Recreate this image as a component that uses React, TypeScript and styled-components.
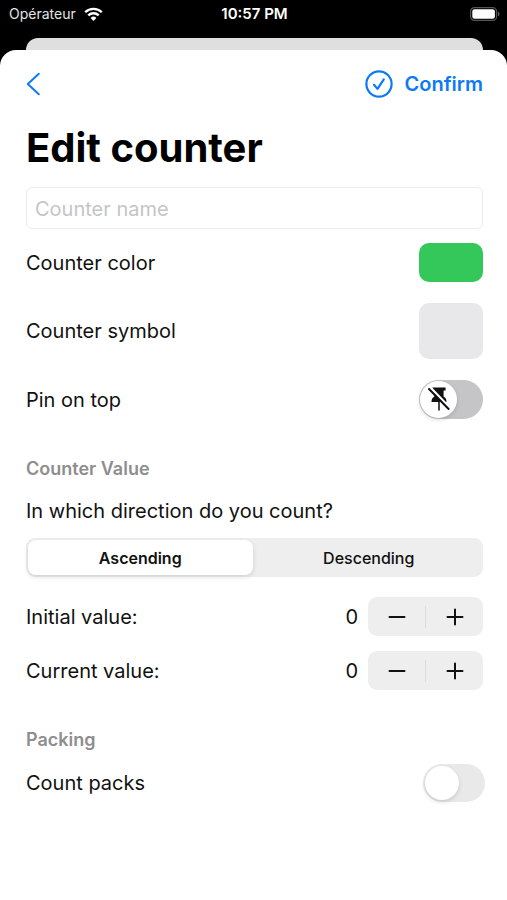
import React, { useState } from "react";
import styled, { createGlobalStyle } from "styled-components";

const GlobalStyle = createGlobalStyle`
  *, *::before, *::after { box-sizing: border-box; }
  body {
    margin: 0;
    background: #000;
    color: #111;
    font-family: Inter, "Liberation Sans", sans-serif;
    font-size: 20px;
    line-height: 24px;
  }
  button, input { font: inherit; color: inherit; }
  button { border: 0; padding: 0; background: none; cursor: pointer; }
`;

const Screen = styled.div`
  min-height: 100vh;
  display: flex;
  flex-direction: column;
  background: #000;
`;

const StatusBar = styled.header`
  display: grid;
  grid-template-columns: 1fr auto 1fr;
  align-items: center;
  height: 28px;
  padding: 0 7px 0 9px;
  color: #fff;
  font-size: 14px;
  line-height: 20px;
`;

const Carrier = styled.div`
  display: flex;
  align-items: center;
  gap: 8px;
  color: #e4e4e4;
`;

const Clock = styled.time`
  font-size: 15px;
  font-weight: 600;
`;

const Battery = styled.div`
  display: flex;
  justify-content: flex-end;
`;

const BackSheet = styled.div`
  height: 12px;
  margin: 10px 24px 0 26px;
  border-radius: 12px 12px 0 0;
  background: #dfdfdf;
`;

const Sheet = styled.main`
  flex: 1;
  padding: 14px 24px 40px 26px;
  border-radius: 16px 16px 0 0;
  background: #fff;
`;

const NavBar = styled.nav`
  display: flex;
  align-items: center;
  justify-content: space-between;
  height: 40px;
  color: #0b7bf5;
`;

const NavButton = styled.button`
  display: flex;
  align-items: center;
  gap: 12px;
  color: inherit;
  font-weight: 600;
`;

const Title = styled.h1`
  margin: 20px 0 15px;
  color: #000;
  font-size: 40px;
  line-height: 48px;
  font-weight: 700;
`;

const NameInput = styled.input`
  display: block;
  width: 100%;
  height: 42px;
  padding: 2px 8px 0;
  border: 1px solid #ececec;
  border-radius: 6px;
  background: #fff;
  &::placeholder { color: #c5c5c7; opacity: 1; }
`;

const Fields = styled.div`
  display: flex;
  flex-direction: column;
  gap: 21px;
  padding-top: 14px;
`;

const Row = styled.div`
  display: flex;
  align-items: center;
  justify-content: space-between;
  min-height: 39px;
`;

const Swatch = styled.button<{ $color: string; $tall?: boolean }>`
  width: 64px;
  height: ${(p) => (p.$tall ? 56 : 39)}px;
  border-radius: 10px;
  background: ${(p) => p.$color};
`;

const SwitchFrame = styled.div<{ $outset?: boolean }>`
  position: relative;
  display: flex;
  margin-right: ${(p) => (p.$outset ? "-2px" : "0")};
`;

const Switch = styled.input<{ $track: string; $width: number; $height: number }>`
  appearance: none;
  display: flex;
  width: ${(p) => p.$width}px;
  height: ${(p) => p.$height}px;
  margin: 0;
  padding: ${(p) => (p.$height === 39 ? 1 : 2)}px;
  border-radius: 20px;
  background: ${(p) => p.$track};
  cursor: pointer;
  &::before {
    content: "";
    height: 100%;
    aspect-ratio: 1;
    border-radius: 50%;
    background: #fff;
    box-shadow: 0 2px 4px rgba(0, 0, 0, 0.14);
  }
  &:checked { justify-content: flex-end; background: #34c759; }
`;

const SwitchIcon = styled.span<{ $on: boolean }>`
  position: absolute;
  top: 0;
  ${(p) => (p.$on ? "right" : "left")}: 1px;
  display: grid;
  place-items: center;
  width: 37px;
  height: 37px;
  pointer-events: none;
`;

const SectionTitle = styled.h2`
  margin: 38px 0 11px;
  color: #8e8e8e;
  font-size: 18px;
  line-height: 24px;
  font-weight: 600;
`;

const Segmented = styled.fieldset`
  margin: 0;
  padding: 0;
  border: 0;
  min-width: 0;
`;

const Question = styled.legend`
  padding: 7px 0 15px;
`;

const Segments = styled.div`
  display: grid;
  grid-template-columns: 1fr 1fr;
  gap: 4px;
  padding: 2px;
  border-radius: 9px;
  background: #eee;
`;

const Segment = styled.label`
  display: grid;
  place-items: center;
  height: 35px;
  border-radius: 8px;
  font-size: 16px;
  line-height: 20px;
  font-weight: 500;
  cursor: pointer;
  &:has(input:checked) {
    background: #fff;
    font-weight: 600;
    box-shadow: 0 2px 5px rgba(0, 0, 0, 0.12);
  }
`;

const SegmentRadio = styled.input`
  position: absolute;
  appearance: none;
  margin: 0;
`;

const Values = styled.div`
  display: flex;
  flex-direction: column;
  gap: 15px;
  padding-top: 20px;
`;

const StepperGroup = styled.div`
  display: flex;
  align-items: center;
  gap: 10px;
`;

const Stepper = styled.div`
  display: flex;
  align-items: center;
  width: 115px;
  height: 39px;
  border-radius: 9px;
  background: #eee;
`;

const StepButton = styled.button`
  flex: 1;
  display: grid;
  place-items: center;
  height: 100%;
`;

const StepDivider = styled.span`
  width: 1px;
  height: 22px;
  background: #dcdcdc;
`;

function WifiIcon() {
  return (
    <svg width="19" height="14" viewBox="0 0 19 14" fill="none" stroke="#fff" strokeWidth="2.3" aria-hidden="true">
      <path d="M1.2 5.2a11.8 11.8 0 0 1 16.6 0" />
      <path d="M4.3 8.4a7.4 7.4 0 0 1 10.4 0" />
      <path d="M9.5 14 6.6 11a4.1 4.1 0 0 1 5.8 0z" fill="#fff" stroke="none" />
    </svg>
  );
}

function BatteryIcon() {
  return (
    <svg width="30" height="14" viewBox="0 0 30 14" aria-hidden="true">
      <rect x="0.6" y="0.6" width="26" height="12.8" rx="3.8" fill="none" stroke="#555" strokeWidth="1.2" />
      <rect x="2.3" y="2.2" width="22.6" height="9.6" rx="2.2" fill="#fff" />
      <path d="M28 4.7c1.9.7 1.9 3.9 0 4.6z" fill="#666" />
    </svg>
  );
}

function BackIcon() {
  return (
    <svg width="15" height="24" viewBox="0 0 15 24" fill="none" stroke="currentColor" strokeWidth="2" strokeLinecap="round" strokeLinejoin="round" aria-hidden="true">
      <path d="M12.8 1.8 1.800 12l11 10.2" />
    </svg>
  );
}

function ConfirmIcon() {
  return (
    <svg width="28" height="28" viewBox="0 0 28 28" fill="none" stroke="currentColor" strokeWidth="2.2" strokeLinecap="round" strokeLinejoin="round" aria-hidden="true">
      <circle cx="14" cy="14" r="12.6" />
      <path d="m9 14.8 3.5 4.1 6.3-9.5" />
    </svg>
  );
}

function UnpinIcon() {
  return (
    <svg width="22" height="26" viewBox="0 0 22 26" aria-hidden="true">
      <path d="M4.4 1.4h13.2v3.2h-2v6c2 1 2.900 2.700 2.900 5.400H3.500c0-2.700.900-4.400 2.900-5.400v-6h-2z" fill="#111" />
      <path d="M11 16v8.400" stroke="#333" strokeWidth="1.800" />
      <path d="m2.400 1.600 18.800 19.600" stroke="#fff" strokeWidth="2.600" />
      <path d="m1 3 19.600 20" stroke="#111" strokeWidth="2" strokeLinecap="round" />
    </svg>
  );
}

function StepIcon({ plus }: { plus?: boolean }) {
  return (
    <svg width="18" height="18" viewBox="0 0 18 18" stroke="#111" strokeWidth="2" strokeLinecap="round" aria-hidden="true">
      <path d={plus ? "M1.500 9h15M9 1.500v15" : "M1.500 9h15"} />
    </svg>
  );
}

function ValueRow({ label }: { label: string }) {
  const [value, setValue] = useState(0);
  return (
    <Row>
      <span>{label}:</span>
      <StepperGroup>
        <output aria-label={label}>{value}</output>
        <Stepper role="group" aria-label={label}>
          <StepButton type="button" aria-label={`Decrease ${label}`} onClick={() => setValue(value - 1)}>
            <StepIcon />
          </StepButton>
          <StepDivider />
          <StepButton type="button" aria-label={`Increase ${label}`} onClick={() => setValue(value + 1)}>
            <StepIcon plus />
          </StepButton>
        </Stepper>
      </StepperGroup>
    </Row>
  );
}

const directions = ["Ascending", "Descending"];

export default function App() {
  const [pinned, setPinned] = useState(false);
  const [direction, setDirection] = useState(directions[0]);

  return (
    <Screen>
      <GlobalStyle />
      <StatusBar>
        <Carrier>
          Opérateur
          <WifiIcon />
        </Carrier>
        <Clock>10:57 PM</Clock>
        <Battery>
          <BatteryIcon />
        </Battery>
      </StatusBar>
      <BackSheet />
      <Sheet>
        <NavBar>
          <NavButton type="button" aria-label="Back">
            <BackIcon />
          </NavButton>
          <NavButton type="button">
            <ConfirmIcon />
            Confirm
          </NavButton>
        </NavBar>
        <Title>Edit counter</Title>
        <NameInput type="text" placeholder="Counter name" aria-label="Counter name" />
        <Fields>
          <Row>
            <span id="color-label">Counter color</span>
            <Swatch type="button" $color="#34c759" aria-labelledby="color-label" />
          </Row>
          <Row>
            <span id="symbol-label">Counter symbol</span>
            <Swatch type="button" $color="#e8e8ea" $tall aria-labelledby="symbol-label" />
          </Row>
          <Row>
            <label htmlFor="pin">Pin on top</label>
            <SwitchFrame>
              <Switch
                id="pin"
                type="checkbox"
                role="switch"
                $track="#c5c5c7"
                $width={64}
                $height={39}
                checked={pinned}
                onChange={(e) => setPinned(e.target.checked)}
              />
              <SwitchIcon $on={pinned}>
                <UnpinIcon />
              </SwitchIcon>
            </SwitchFrame>
          </Row>
        </Fields>

        <SectionTitle>Counter Value</SectionTitle>
        <Segmented>
          <Question>In which direction do you count?</Question>
          <Segments>
            {directions.map((name) => (
              <Segment key={name}>
                <SegmentRadio
                  type="radio"
                  name="direction"
                  checked={direction === name}
                  onChange={() => setDirection(name)}
                />
                {name}
              </Segment>
            ))}
          </Segments>
        </Segmented>
        <Values>
          <ValueRow label="Initial value" />
          <ValueRow label="Current value" />
        </Values>

        <SectionTitle>Packing</SectionTitle>
        <Row>
          <label htmlFor="packs">Count packs</label>
          <SwitchFrame $outset>
            <Switch id="packs" type="checkbox" role="switch" $track="#e9e9ea" $width={62} $height={38} />
          </SwitchFrame>
        </Row>
      </Sheet>
    </Screen>
  );
}
